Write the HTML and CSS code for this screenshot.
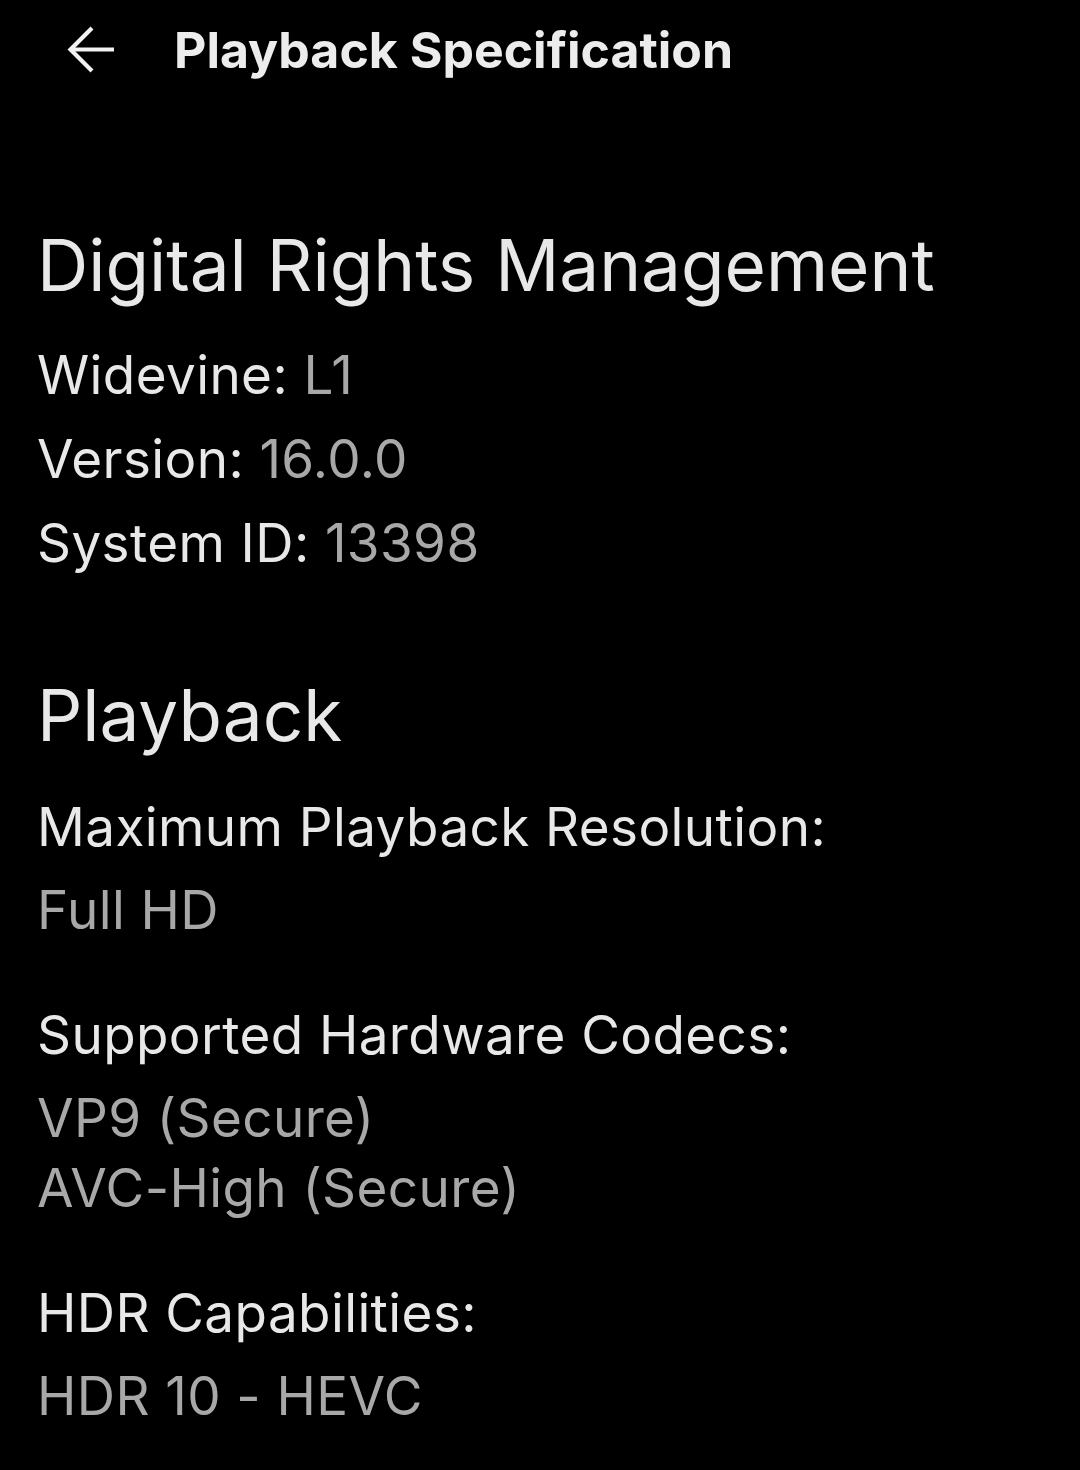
FILE: index.html
```html
<!DOCTYPE html>
<html lang="en">
<head>
  <meta charset="UTF-8" />
  <meta name="viewport" content="width=device-width, initial-scale=1" />
  <title>Playback Specification</title>
  <link rel="stylesheet" href="styles.css">
</head>
<body>
  <!-- TOP BAR -->
  <div class="topbar">
    <button class="back-btn" aria-label="Back">
      <svg width="50" height="50" viewBox="0 0 50 50" fill="none" stroke="currentColor" stroke-width="4.2" stroke-linecap="butt" stroke-linejoin="miter">
        <path d="M48 24.5 H6" />
        <path d="M26 3 L4.5 24.5 L26 46" />
      </svg>
    </button>
    <h1 class="title">Playback Specification</h1>
  </div>

  <!-- DRM -->
  <div class="section">
    <h2>Digital Rights Management</h2>
    <div class="rows">
      <div class="row">Widevine: <span class="value">L1</span></div>
      <div class="row">Version: <span class="value">16.0.0</span></div>
      <div class="row">System ID: <span class="value">13398</span></div>
    </div>
  </div>

  <!-- PLAYBACK -->
  <div class="section playback">
    <h2>Playback</h2>
    <div class="fields">
      <div class="field">
        <div class="label">Maximum Playback Resolution:</div>
        <div class="value-list">
          <div class="value">Full HD</div>
        </div>
      </div>
      <div class="field">
        <div class="label">Supported Hardware Codecs:</div>
        <div class="value-list">
          <div class="value">VP9 (Secure)</div>
          <div class="value">AVC-High (Secure)</div>
        </div>
      </div>
      <div class="field">
        <div class="label">HDR Capabilities:</div>
        <div class="value-list">
          <div class="value">HDR 10 - HEVC</div>
        </div>
      </div>
    </div>
  </div>
</body>
</html>
```

FILE: styles.css
```css
body {
  margin: 0;
  background: #000;
  color: #e8e8e8;
  font-family: Inter, "Noto Sans", Roboto, sans-serif;
}
.topbar {
  display: flex;
  align-items: center;
  height: 100px;
}
.back-btn {
  background: none;
  border: none;
  padding: 0;
  margin-left: 66px;
  width: 50px;
  height: 50px;
  color: #f2f2f2;
  cursor: pointer;
}
.back-btn svg {
  display: block;
}
.title {
  margin: 0 0 0 58px;
  font-size: 50px;
  font-weight: 700;
  color: #ececec;
}
.section {
  padding: 0 37px;
}
.section h2 {
  margin: 0;
  font-size: 71px;
  font-weight: 400;
  line-height: 90px;
  color: #e8e8e8;
}
.topbar + .section {
  margin-top: 120px;
}
.rows {
  margin-top: 23px;
}
.row {
  font-size: 53px;
  line-height: 84px;
  letter-spacing: 0.4px;
}
.value {
  color: #a8a8a8;
}
.playback {
  margin-top: 85px;
}
.fields {
  margin-top: 32px;
  display: flex;
  flex-direction: column;
  gap: 55px;
}
.field .label,
.value-list {
  font-size: 53px;
  line-height: 70px;
  letter-spacing: 0.4px;
}
.value-list {
  margin-top: 13px;
}
```
